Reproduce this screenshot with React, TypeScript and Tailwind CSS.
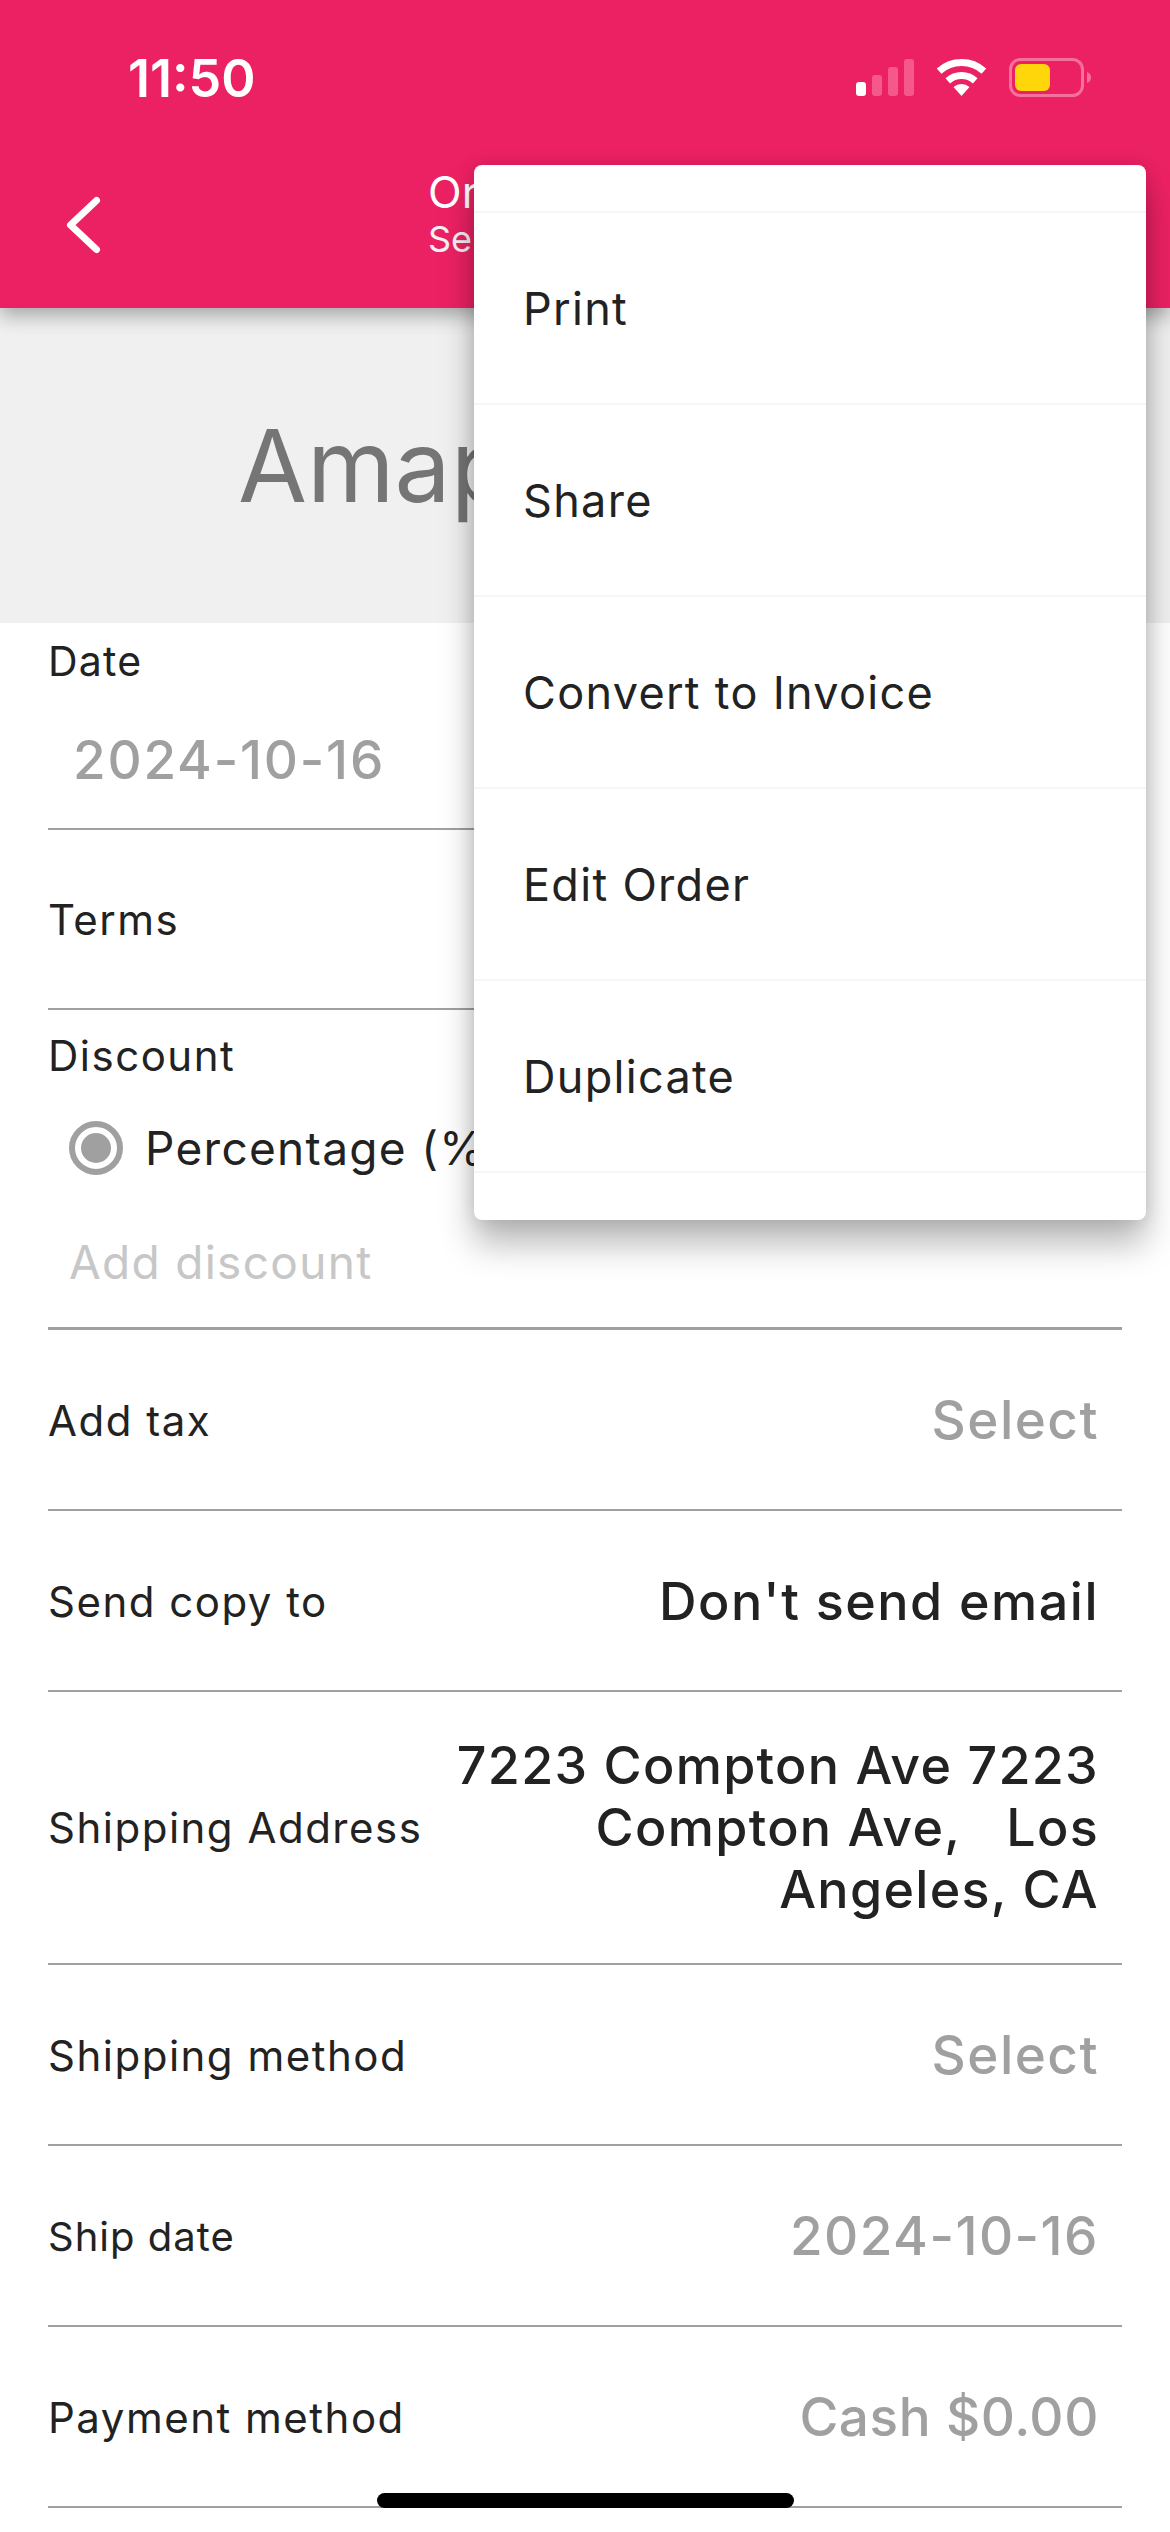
const font = "font-['Inter','Liberation_Sans',sans-serif]"

function StatusIcons() {
  return (
    <div className="flex items-start gap-[22px] mr-[79px] mt-[59px]">
      <svg width="58" height="37" viewBox="0 0 58 37" className="block">
        <rect x="0" y="23" width="10" height="14" rx="3" fill="#fff" />
        <rect x="16" y="16" width="10" height="21" rx="3" fill="#f5588a" />
        <rect x="32" y="8" width="10" height="29" rx="3" fill="#f5588a" />
        <rect x="48" y="0" width="10" height="37" rx="3" fill="#f5588a" />
      </svg>
      <svg width="51" height="37" viewBox="0 0 51 37" className="block" fill="none">
        <path d="M3.1 12.1A33.5 33.5 0 0 1 47.9 12.1" stroke="#fff" strokeWidth="7" />
        <path d="M11.8 21.8A20.5 20.5 0 0 1 39.2 21.8" stroke="#fff" strokeWidth="7" />
        <path d="M25.5 37L17.5 28.1A12 12 0 0 1 33.5 28.1Z" fill="#fff" />
      </svg>
      <svg width="82" height="39" viewBox="0 0 82 39" className="block -mt-px" fill="none">
        <rect x="1.5" y="1.5" width="72" height="36" rx="10" stroke="#f5709b" strokeWidth="3" />
        <rect x="6" y="6" width="35" height="27" rx="6" fill="#ffd60a" />
        <path d="M78 14C81 15 82 17 82 19.5C82 22 81 24 78 25Z" fill="#f5709b" />
      </svg>
    </div>
  )
}

function Row({ label, value, strong, small, tight }: { label: string; value: string; strong?: boolean; small?: boolean; tight?: boolean }) {
  const valueClass = strong
    ? "text-[52px] font-medium tracking-[1.5px] text-[#222]"
    : tight
      ? "text-[53px] font-medium tracking-[0.6px] text-[#a0a0a0]"
      : "text-[53px] font-medium tracking-[1.5px] text-[#a0a0a0]"
  return (
    <div className="flex items-center justify-between h-[181px] pt-[2px] mx-12 pr-[23px] border-b-2 border-[#a0a0a0]">
      <span className={small ? "text-[40px] tracking-[1px] text-[#222]" : "text-[42px] tracking-[1.5px] text-[#222]"}>{label}</span>
      <span className={valueClass}>{value}</span>
    </div>
  )
}

function MenuItem({ children }: { children: string }) {
  return (
    <div className="flex items-center h-[192px] pt-[2px] pl-[49px] border-b-2 border-[#f6f6f6] text-[45px] tracking-[1.3px] text-[#222]">
      {children}
    </div>
  )
}

export default function App() {
  return (
    <div className={`relative w-[1170px] h-[2532px] overflow-hidden bg-white ${font}`}>
      <header className="relative z-10 h-[308px] bg-[#ec2163] shadow-[0_8px_18px_rgba(0,0,0,0.3)]">
        <div className="flex justify-between h-[165px]">
          <span className="ml-[128px] mt-[49px] text-[52px] leading-[60px] font-semibold text-white">11:50</span>
          <StatusIcons />
        </div>
        <div className="flex items-start">
          <svg width="40" height="60" viewBox="0 0 40 60" className="block ml-[64px] mt-[30px]" fill="none">
            <path d="M32.5 5.5L6.5 30L32.5 54.5" stroke="#fff" strokeWidth="7" strokeLinecap="round" strokeLinejoin="round" />
          </svg>
          <div className="ml-[324px] text-white">
            <div className="text-[44px] leading-[54px]">Order</div>
            <div className="text-[36px] leading-[40px] text-[#f2f2f2]">Sent</div>
          </div>
        </div>
      </header>

      <div className="flex items-center h-[315px] pl-[238px] bg-[#f0f0f0] text-[100px] text-[#757575]">Amapola</div>

      <div className="mx-12 h-[207px] border-b-2 border-[#a0a0a0]">
        <div className="pt-[14px] text-[41px] leading-[48px] tracking-[1.2px] text-[#222]">Date</div>
        <div className="pl-[25px] mt-[44px] text-[53px] font-medium leading-[62px] tracking-[1.8px] text-[#a0a0a0]">2024-10-16</div>
      </div>
      <div className="flex items-center mx-12 h-[180px] border-b-2 border-[#a0a0a0] text-[42px] tracking-[1.5px] text-[#222]">Terms</div>
      <div className="mx-12 h-[320px] border-b-[3px] border-[#a0a0a0]">
        <div className="pt-[22px] text-[42px] leading-[48px] tracking-[1.5px] text-[#222]">Discount</div>
        <div className="flex items-center gap-[22px] pl-[21px] mt-[40px]">
          <div className="flex items-center justify-center w-[54px] h-[54px] rounded-full border-[6px] border-[#a0a0a0]">
            <div className="w-[30px] h-[30px] rounded-full bg-[#a0a0a0]" />
          </div>
          <span className="text-[46px] leading-[56px] tracking-[1.3px] text-[#222]">Percentage (%)</span>
        </div>
        <div className="pl-[21px] mt-[58px] text-[46px] leading-[56px] tracking-[1.3px] text-[#c7c7c7]">Add discount</div>
      </div>

      <Row label="Add tax" value="Select" />
      <Row label="Send copy to" value="Don't send email" strong />
      <div className="flex items-center justify-between h-[273px] mx-12 pr-[23px] border-b-2 border-[#a0a0a0]">
        <span className="text-[42px] tracking-[1.5px] text-[#222]">Shipping Address</span>
        <span className="w-[660px] text-right text-[52px] leading-[62px] font-medium tracking-[1.3px] text-[#222] whitespace-pre-wrap">
          {"7223 Compton Ave 7223 Compton Ave,   Los Angeles, CA"}
        </span>
      </div>
      <Row label="Shipping method" value="Select" />
      <Row label="Ship date" value="2024-10-16" small />
      <Row label="Payment method" value="Cash $0.00" tight />

      <div className="absolute z-20 left-[474px] top-[165px] w-[672px] h-[1055px] rounded-[8px] bg-white shadow-[0_24px_34px_rgba(0,0,0,0.28),0_0_18px_rgba(0,0,0,0.12)]">
        <div className="h-[48px] border-b-2 border-[#f6f6f6]" />
        <MenuItem>Print</MenuItem>
        <MenuItem>Share</MenuItem>
        <MenuItem>Convert to Invoice</MenuItem>
        <MenuItem>Edit Order</MenuItem>
        <MenuItem>Duplicate</MenuItem>
      </div>

      <div className="absolute z-30 left-[377px] top-[2493px] w-[417px] h-[15px] rounded-full bg-black" />
    </div>
  )
}
